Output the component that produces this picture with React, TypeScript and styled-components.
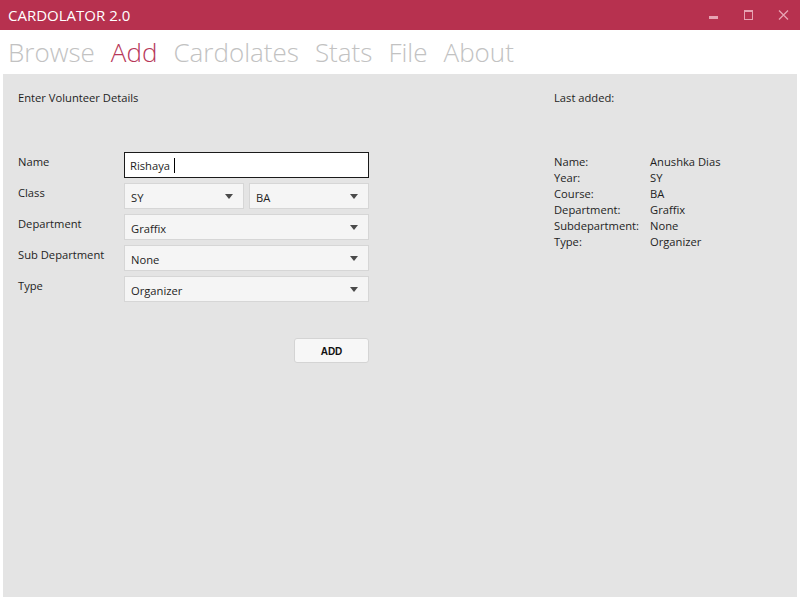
import React, { useState } from 'react'
import styled, { createGlobalStyle } from 'styled-components'

const GlobalStyle = createGlobalStyle`
  html, body {
    margin: 0;
    padding: 0;
    background: #ffffff;
  }
  body {
    font-family: "Open Sans", "Noto Sans", "Liberation Sans", sans-serif;
  }
`

const ACCENT = '#b7314f'

const tabs = ['Browse', 'Add', 'Cardolates', 'Stats', 'File', 'About']

const lastAdded: [string, string][] = [
  ['Name:', 'Anushka Dias'],
  ['Year:', 'SY'],
  ['Course:', 'BA'],
  ['Department:', 'Graffix'],
  ['Subdepartment:', 'None'],
  ['Type:', 'Organizer'],
]

export default function App() {
  const [active, setActive] = useState('Add')

  return (
    <Window>
      <GlobalStyle />
      <TitleBar>
        <Title>CARDOLATOR 2.0</Title>
        <WindowControls>
          <ControlButton aria-label="minimize">
            <svg width="10" height="10" viewBox="0 0 10 10">
              <rect x="0" y="6" width="9" height="3" fill="#e7a3b3" />
            </svg>
          </ControlButton>
          <ControlButton aria-label="maximize">
            <svg width="10" height="10" viewBox="0 0 10 10">
              <rect x="0.5" y="0.5" width="8" height="9" fill="none" stroke="#e7a3b3" />
              <rect x="0" y="0" width="9" height="2" fill="#e7a3b3" />
            </svg>
          </ControlButton>
          <ControlButton aria-label="close">
            <svg width="11" height="10" viewBox="0 0 11 10">
              <path d="M1 0.5 L10 9.5 M10 0.5 L1 9.5" stroke="#e7a3b3" strokeWidth="1.3" />
            </svg>
          </ControlButton>
        </WindowControls>
      </TitleBar>

      <Nav>
        {tabs.map((t) => (
          <Tab key={t} $active={t === active} onClick={() => setActive(t)}>
            {t}
          </Tab>
        ))}
      </Nav>

      <Panel>
        <FormColumn>
          <Heading>Enter Volunteer Details</Heading>
          <FormGrid>
            <Label>Name</Label>
            <NameBox>
              Rishaya
              <Caret />
            </NameBox>

            <Label>Class</Label>
            <SplitRow>
              <Select value="SY" />
              <Select value="BA" />
            </SplitRow>

            <Label>Department</Label>
            <Select value="Graffix" />

            <Label>Sub Department</Label>
            <Select value="None" />

            <Label>Type</Label>
            <Select value="Organizer" />
          </FormGrid>
          <ButtonRow>
            <AddButton>ADD</AddButton>
          </ButtonRow>
        </FormColumn>

        <InfoColumn>
          <Heading>Last added:</Heading>
          <InfoGrid>
            {lastAdded.map(([k, v]) => (
              <React.Fragment key={k}>
                <span>{k}</span>
                <span>{v}</span>
              </React.Fragment>
            ))}
          </InfoGrid>
        </InfoColumn>
      </Panel>
    </Window>
  )
}

function Select({ value }: { value: string }) {
  return (
    <SelectBox>
      <span>{value}</span>
      <svg width="8" height="5" viewBox="0 0 8 5">
        <path d="M0 0 L8 0 L4 5 Z" fill="#4a4a4a" />
      </svg>
    </SelectBox>
  )
}

const Window = styled.div`
  width: 800px;
  height: 600px;
  display: flex;
  flex-direction: column;
  background: #ffffff;
  overflow: hidden;
`

const TitleBar = styled.div`
  height: 30px;
  flex-shrink: 0;
  background: ${ACCENT};
  display: flex;
  align-items: center;
  justify-content: space-between;
`

const Title = styled.div`
  color: #ffffff;
  font-size: 15px;
  padding-left: 8px;
`

const WindowControls = styled.div`
  display: flex;
  align-items: center;
  padding-right: 11px;
  gap: 24px;
`

const ControlButton = styled.div`
  width: 11px;
  height: 10px;
  display: flex;
  align-items: center;
  justify-content: center;
`

const Nav = styled.div`
  height: 44px;
  flex-shrink: 0;
  display: flex;
  align-items: center;
  gap: 16px;
  padding-left: 8px;
`

const Tab = styled.div<{ $active: boolean }>`
  font-size: 26px;
  font-weight: 300;
  color: ${(p) => (p.$active ? '#b7385a' : '#c2c2c2')};
  cursor: pointer;
  line-height: 44px;
`

const Panel = styled.div`
  flex: 1;
  margin: 0 3px 3px;
  background: #e4e4e4;
  display: flex;
  padding: 16px 0 0 15px;
  color: #1e1e1e;
  font-size: 11.2px;
`

const FormColumn = styled.div`
  width: 536px;
  flex-shrink: 0;
  display: flex;
  flex-direction: column;
`

const InfoColumn = styled.div`
  display: flex;
  flex-direction: column;
`

const Heading = styled.div`
  line-height: 16px;
`

const FormGrid = styled.div`
  margin-top: 46px;
  display: grid;
  grid-template-columns: 106px 245px;
  grid-auto-rows: 26px;
  row-gap: 5px;
`

const Label = styled.div`
  line-height: 16px;
  padding-top: 2px;
`

const NameBox = styled.div`
  box-sizing: border-box;
  height: 26px;
  width: 245px;
  border: 1.5px solid #1a1a1a;
  background: #ffffff;
  padding: 0 5px;
  display: flex;
  align-items: center;
  color: #1e1e1e;
`

const Caret = styled.span`
  display: inline-block;
  width: 1px;
  height: 15px;
  margin-left: 4px;
  background: #000000;
`

const SplitRow = styled.div`
  display: grid;
  grid-template-columns: 1fr 1fr;
  column-gap: 5px;
`

const SelectBox = styled.div`
  box-sizing: border-box;
  height: 26px;
  border: 1px solid #d6d6d6;
  background: #f5f5f5;
  display: flex;
  align-items: center;
  justify-content: space-between;
  padding: 2px 10px 0 6px;

  svg {
    margin-top: -2px;
  }
`

const ButtonRow = styled.div`
  width: 351px;
  display: flex;
  justify-content: flex-end;
  margin-top: 36px;
`

const AddButton = styled.button`
  box-sizing: border-box;
  width: 75px;
  height: 25px;
  padding: 1px 0 0;
  border: 1px solid #d4d4d4;
  border-radius: 3px;
  background: #f7f7f7;
  font-family: "Liberation Sans", Arial, sans-serif;
  font-weight: bold;
  font-size: 10px;
  color: #111111;
  cursor: pointer;
`

const InfoGrid = styled.div`
  margin-top: 48px;
  display: grid;
  grid-template-columns: 96px auto;
  grid-auto-rows: 16px;
  line-height: 16px;
`
